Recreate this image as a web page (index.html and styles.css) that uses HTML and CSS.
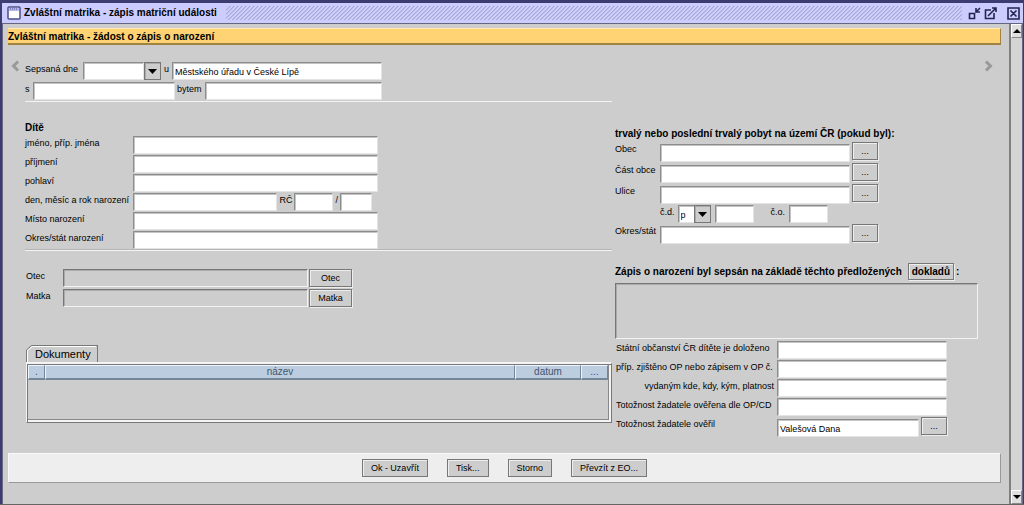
FILE: index.html
```html
<!DOCTYPE html>
<html lang="cs">
<head>
<meta charset="utf-8">
<title>Zvláštní matrika - zápis matriční události</title>
<link rel="stylesheet" href="styles.css">
</head>
<body>
<div class="window">
  <header class="titlebar">
    <svg class="app-icon" width="14" height="14" viewBox="0 0 14 14" aria-hidden="true"><rect x="1" y="1" width="12" height="12" rx="1" fill="#fff" stroke="#4b4b8c" stroke-width="1.5"/><path d="M2 3.5H12" stroke="#b8b8ec" stroke-width="3"/><path d="M3 3H11" stroke="#4b4b8c" stroke-dasharray="1 1"/></svg>
    <h1 class="title">Zvláštní matrika - zápis matriční události</h1>
    <span class="grip"></span>
    <div class="window-buttons">
      <button class="win-btn" aria-label="Minimalizovat"><svg width="13" height="13" viewBox="0 0 13 13"><path d="M1.500 6.500H6.500V11.500H1.500Z M8 1V5H12 M8 5L12 1" fill="none" stroke="#24244f" stroke-width="1.6"/></svg></button>
      <button class="win-btn" aria-label="Maximalizovat"><svg width="13" height="13" viewBox="0 0 13 13"><path d="M7 3H1.500V11.500H10V6M8 1H12V5M4 9L12 1" fill="none" stroke="#24244f" stroke-width="1.6"/></svg></button>
      <button class="win-btn win-close" aria-label="Zavřít"><svg width="13" height="13" viewBox="0 0 13 13"><path d="M1 1H12V12H1ZM3.5 3.5L9.5 9.5M9.5 3.5L3.5 9.5" fill="none" stroke="#24244f" stroke-width="1.6"/></svg></button>
    </div>
  </header>

  <div class="body">
    <main class="content">
      <h2 class="banner">Zvláštní matrika - žádost o zápis o narození</h2>

      <div class="record">
        <button class="nav" aria-label="Předchozí"><svg width="9" height="12" viewBox="0 0 9 12"><path d="M7 1.5L2.5 6L7 10.5" fill="none" stroke="#999" stroke-width="3"/></svg></button>

        <div class="left">
          <section class="intro">
            <div class="line">
              <label class="w-date" for="date">Sepsaná dne</label>
              <span class="combo"><input class="field date" id="date"><button class="drop" aria-label="Vybrat datum"><svg width="9" height="5" viewBox="0 0 9 5"><path d="M0 0H9L4.5 5Z"/></svg></button></span>
              <label class="w-u" for="office">u</label>
              <input class="field grow" id="office" value="Městského úřadu v České Lípě">
            </div>
            <div class="line">
              <label class="w-s" for="with">s</label>
              <input class="field with" id="with">
              <label class="w-addr" for="address">bytem</label>
              <input class="field grow" id="address">
            </div>
          </section>
          <hr class="rule">

          <section class="child">
            <h3 class="heading">Dítě</h3>
            <div class="grid-child">
              <label for="c1">jméno, příp. jména</label><input class="field" id="c1">
              <label for="c2">příjmení</label><input class="field" id="c2">
              <label for="c3">pohlaví</label><input class="field" id="c3">
              <label for="c4">den, měsíc a rok narození</label>
              <span class="birth"><input class="field grow" id="c4"><label for="rc1">RČ</label><input class="field rc" id="rc1"><label for="rc2">/</label><input class="field rc-end" id="rc2"></span>
              <label for="c5">Místo narození</label><input class="field" id="c5">
              <label for="c6">Okres/stát narození</label><input class="field" id="c6">
            </div>
          </section>
          <hr class="rule thick">

          <section class="parents">
            <div class="line"><label class="w-parent" for="father">Otec</label><input class="field flat" id="father" readonly><button class="btn parent-btn">Otec</button></div>
            <div class="line"><label class="w-parent" for="mother">Matka</label><input class="field flat" id="mother" readonly><button class="btn parent-btn">Matka</button></div>
          </section>

          <section class="documents">
            <button class="tab"><svg class="tab-shape" width="72" height="17" viewBox="0 0 72 17" aria-hidden="true"><path d="M1.500 17V5.500L6.500 1.500H70" fill="none" stroke="#fff"/><path d="M.5 17V5L5.500 .5H71" fill="none" stroke="#777"/><path d="M71.5 0V17" stroke="#777"/></svg><span class="tab-text">Dokumenty</span></button>
            <div class="panel">
              <table class="docs">
                <thead><tr><th class="c-mark">.</th><th>název</th><th class="c-date">datum</th><th class="c-more">...</th></tr></thead>
              </table>
            </div>
          </section>
        </div>

        <div class="right">
          <section>
            <h3 class="heading">trvalý nebo poslední trvalý pobyt na území ČR (pokud byl):</h3>
            <div class="residence">
              <div class="line"><label class="w-res" for="r1">Obec</label><input class="field place" id="r1"><button class="btn more" aria-label="Vybrat obec">...</button></div>
              <div class="line"><label class="w-res" for="r2">Část obce</label><input class="field place" id="r2"><button class="btn more" aria-label="Vybrat část obce">...</button></div>
              <div class="line"><label class="w-res" for="r3">Ulice</label><input class="field place" id="r3"><button class="btn more" aria-label="Vybrat ulici">...</button></div>
              <div class="line numbers">
                <label for="cd">č.d.</label>
                <span class="combo kind"><select class="field kind-select" id="cd"><option>p</option><option>e</option></select><span class="drop kind-arrow"><svg width="9" height="5" viewBox="0 0 9 5"><path d="M0 0H9L4.5 5Z"/></svg></span></span>
                <input class="field rc" aria-label="Číslo domovní">
                <label class="w-co" for="co">č.o.</label><input class="field rc" id="co">
              </div>
              <div class="line"><label class="w-res" for="r4">Okres/stát</label><input class="field place" id="r4"><button class="btn more" aria-label="Vybrat okres">...</button></div>
            </div>
          </section>

          <section class="basis">
            <h3 class="heading basis-head"><label for="papers">Zápis o narození byl sepsán na základě těchto předložených</label> <button class="btn strong">dokladů</button>:</h3>
            <textarea class="field flat papers" id="papers" readonly></textarea>
            <div class="grid-proof">
              <label for="p1">Státní občanství ČR dítěte je doloženo</label><input class="field" id="p1">
              <label for="p2">příp. zjištěno OP nebo zápisem v OP č.</label><input class="field" id="p2">
              <label class="end" for="p3">vydaným kde, kdy, kým, platnost</label><input class="field" id="p3">
              <label for="p4">Totožnost žadatele ověřena dle OP/CD</label><input class="field" id="p4">
              <label for="p5">Totožnost žadatele ověřil</label><span class="verifier"><input class="field grow" id="p5" value="Valešová Dana"><button class="btn more" aria-label="Vybrat osobu">...</button></span>
            </div>
          </section>
        </div>

        <button class="nav" aria-label="Další"><svg width="9" height="12" viewBox="0 0 9 12"><path d="M2 1.500L6.500 6L2 10.500" fill="none" stroke="#999" stroke-width="3"/></svg></button>
      </div>

      <footer class="actions">
        <button class="btn action">Ok - Uzavřít</button>
        <button class="btn action">Tisk...</button>
        <button class="btn action">Storno</button>
        <button class="btn action">Převzít z EO...</button>
      </footer>
    </main>

    <div class="scrollbar">
      <button class="scroll-btn" aria-label="Nahoru"><svg width="8" height="4" viewBox="0 0 8 4"><path d="M0 4H8L4 0Z"/></svg></button>
      <button class="scroll-btn" aria-label="Dolů"><svg width="8" height="4" viewBox="0 0 8 4"><path d="M0 0H8L4 4Z"/></svg></button>
    </div>
  </div>
</div>
</body>
</html>
```
FILE: styles.css
```css
* { box-sizing: border-box; }
body { margin: 0; background: #3c3c70; color: #000; font: 9px/12px "Liberation Sans", Arial, sans-serif; }
h1, h2, h3 { margin: 0; }
button, input, select, textarea { font: inherit; color: inherit; margin: 0; border-radius: 0; }
button { padding: 0; }
svg { display: block; }

.window { min-height: 100vh; display: flex; flex-direction: column; padding: 3px 1px 0 2px; border-bottom: 1px solid #666; }
.titlebar { display: flex; align-items: center; height: 20px; padding: 0 3px 0 5px; background: #ccccff; }
.title { margin-left: 3px; font-size: 10px; line-height: 14px; white-space: nowrap; }
.grip { flex: 1; height: 14px; margin: 0 6px 0 9px; background: linear-gradient(135deg, #a8a8d8 12%, #d0d0ff 13% 49%, #a8a8d8 50% 62%, #d0d0ff 63%) 0 0 / 4px 4px; }
.window-buttons { display: flex; gap: 3px; }
.win-btn { border: 0; background: none; }
.win-close { margin-left: 7px; }

.body { flex: 1; display: flex; border: 1px solid #666680; border-bottom: 0; background: #cdcdcd; }
.content { flex: 1; min-width: 0; padding: 4px 8px 0 5px; }
.banner { padding: 2px 0 0; background: #ffd273; border: 1px solid #ffe9b5; border-left: 0; border-right-color: #a08340; border-bottom: 2px solid #a08340; font-size: 10px; line-height: 12px; }
.record { display: flex; padding: 15px 8px 0 3px; }
.nav { align-self: flex-start; border: 0; background: none; }
.left { flex: 587; min-width: 0; margin: 2px 3px 0 5px; }
.right { flex: 363; min-width: 0; margin-right: 6px; padding-top: 67px; }

.line { display: flex; }
.line label { flex: none; }
.field { display: block; min-width: 0; width: 100%; height: 18px; padding: 1px 0 0 2px; background: #fff; border: 1px solid #e4e4e4; border-top-color: #8c8c8c; border-left-color: #8c8c8c; box-shadow: inset 1px 1px #c4c4c4; outline: 0; }
.flat { background: #cdcdcd; border-color: #777 #f2f2f2 #f2f2f2 #777; box-shadow: inset 1px 1px #aaa; }
.grow { flex: 1; }
label { padding-top: 1px; white-space: nowrap; }
.combo { display: flex; flex: none; }
.drop { display: flex; align-items: center; justify-content: center; width: 17px; height: 18px; background: #cdcdcd; border: 1px solid #777; box-shadow: inset 1px 1px #aaa; }

.intro { width: 357px; display: grid; gap: 2px; }
.w-date { width: 58px; }
.date { width: 61px; }
.w-u { width: 11px; padding-left: 3px; }
.w-s { width: 8px; }
.with { width: 142px; }
.w-addr { width: 30px; padding-left: 2px; }
.rule { margin: 1px 0 0; border: 0; border-top: 1px solid #f4f4f4; }
.thick { margin-top: 0; border-top: 1px solid #b5b5b5; border-bottom: 1px solid #f4f4f4; }
.heading { font-size: 10px; line-height: 14px; white-space: nowrap; }
.child { padding-top: 19px; }
.grid-child { display: grid; grid-template-columns: 108px 245px; row-gap: 1px; margin-top: 1px; }
.birth { display: flex; gap: 2px; padding-right: 6px; }
.rc { flex: none; width: 39px; }
.rc-end { width: 32px; }

.parents { display: grid; gap: 2px; padding: 18px 0 0 1px; }
.w-parent { width: 37px; }
.parents .field { width: 245px; }
.btn { border: 1px solid #777; background: #cdcdcd; box-shadow: inset 1px 1px #eee, 1px 1px #eee; height: 18px; white-space: nowrap; }
.parent-btn { width: 43px; margin-left: 1px; }

.documents { padding: 38px 0 0 1px; }
.tab { position: relative; display: block; width: 72px; height: 17px; border: 0; background: none; font-size: 11px; text-align: left; }
.tab-shape { position: absolute; inset: 0; }
.tab-text { padding-left: 9px; }
.panel { height: 61px; border: 1px solid #777; border-top: 2px solid #f4f4f4; border-left-color: #f4f4f4; box-shadow: inset 1px 1px #777, inset -2px -2px #f4f4f4, inset -3px -3px #888; padding: 1px 3px 0 1px; }
.docs { width: 100%; table-layout: fixed; border-collapse: separate; border-spacing: 0; font-size: 10px; color: #44556f; }
.docs th { height: 15px; padding: 0; font-weight: 400; line-height: 12px; background: #bccddf; border: 1px solid #edf4fa; border-right: 1px solid #73869a; border-bottom: 2px solid #73869a; }
.docs .c-mark { width: 17px; }
.docs .c-date { width: 66px; }
.docs .c-more { width: 27px; }

.residence { display: grid; gap: 1px; margin-top: 1px; }
.w-res { width: 45px; }
.place { width: 190px; margin-top: 2px; }
.more { flex: none; width: 26px; margin-left: 2px; }
.numbers { padding-left: 45px; }
.kind { position: relative; margin: 0 4px 0 3px; }
.kind-select { width: 33px; appearance: none; line-height: 12px; }
.kind-arrow { position: absolute; right: 0; top: 0; pointer-events: none; }
.w-co { padding: 1px 4px 0 17px; }
.basis { padding-top: 19px; }
.basis-head { display: flex; align-items: center; }
.strong { height: 17px; padding: 0 3px; margin: 0 2px 0 6px; font-weight: 700; }
.papers { height: 56px; margin-top: 3px; resize: none; }
.grid-proof { display: grid; grid-template-columns: 161px 170px; row-gap: 1px; margin: 2px 0 0 1px; }
.end { text-align: right; padding-right: 3px; }
.verifier { display: flex; }
.verifier .field { margin-top: 2px; }
.actions { display: flex; justify-content: center; gap: 19px; margin-top: 16px; padding: 5px 0 5px; background: #eee; border: 1px solid #fafafa; border-right-color: #999; border-bottom: 1px solid #999; }
.action { padding: 0 8px; }
.scrollbar { display: flex; flex-direction: column; justify-content: space-between; width: 13px; border-left: 2px solid #808080; background: #d4d4d4; }
.scroll-btn { display: flex; align-items: center; justify-content: center; height: 14px; background: #e0e0e0; border: 1px solid #fff; border-right-color: #888; border-bottom-color: #888; }
```
